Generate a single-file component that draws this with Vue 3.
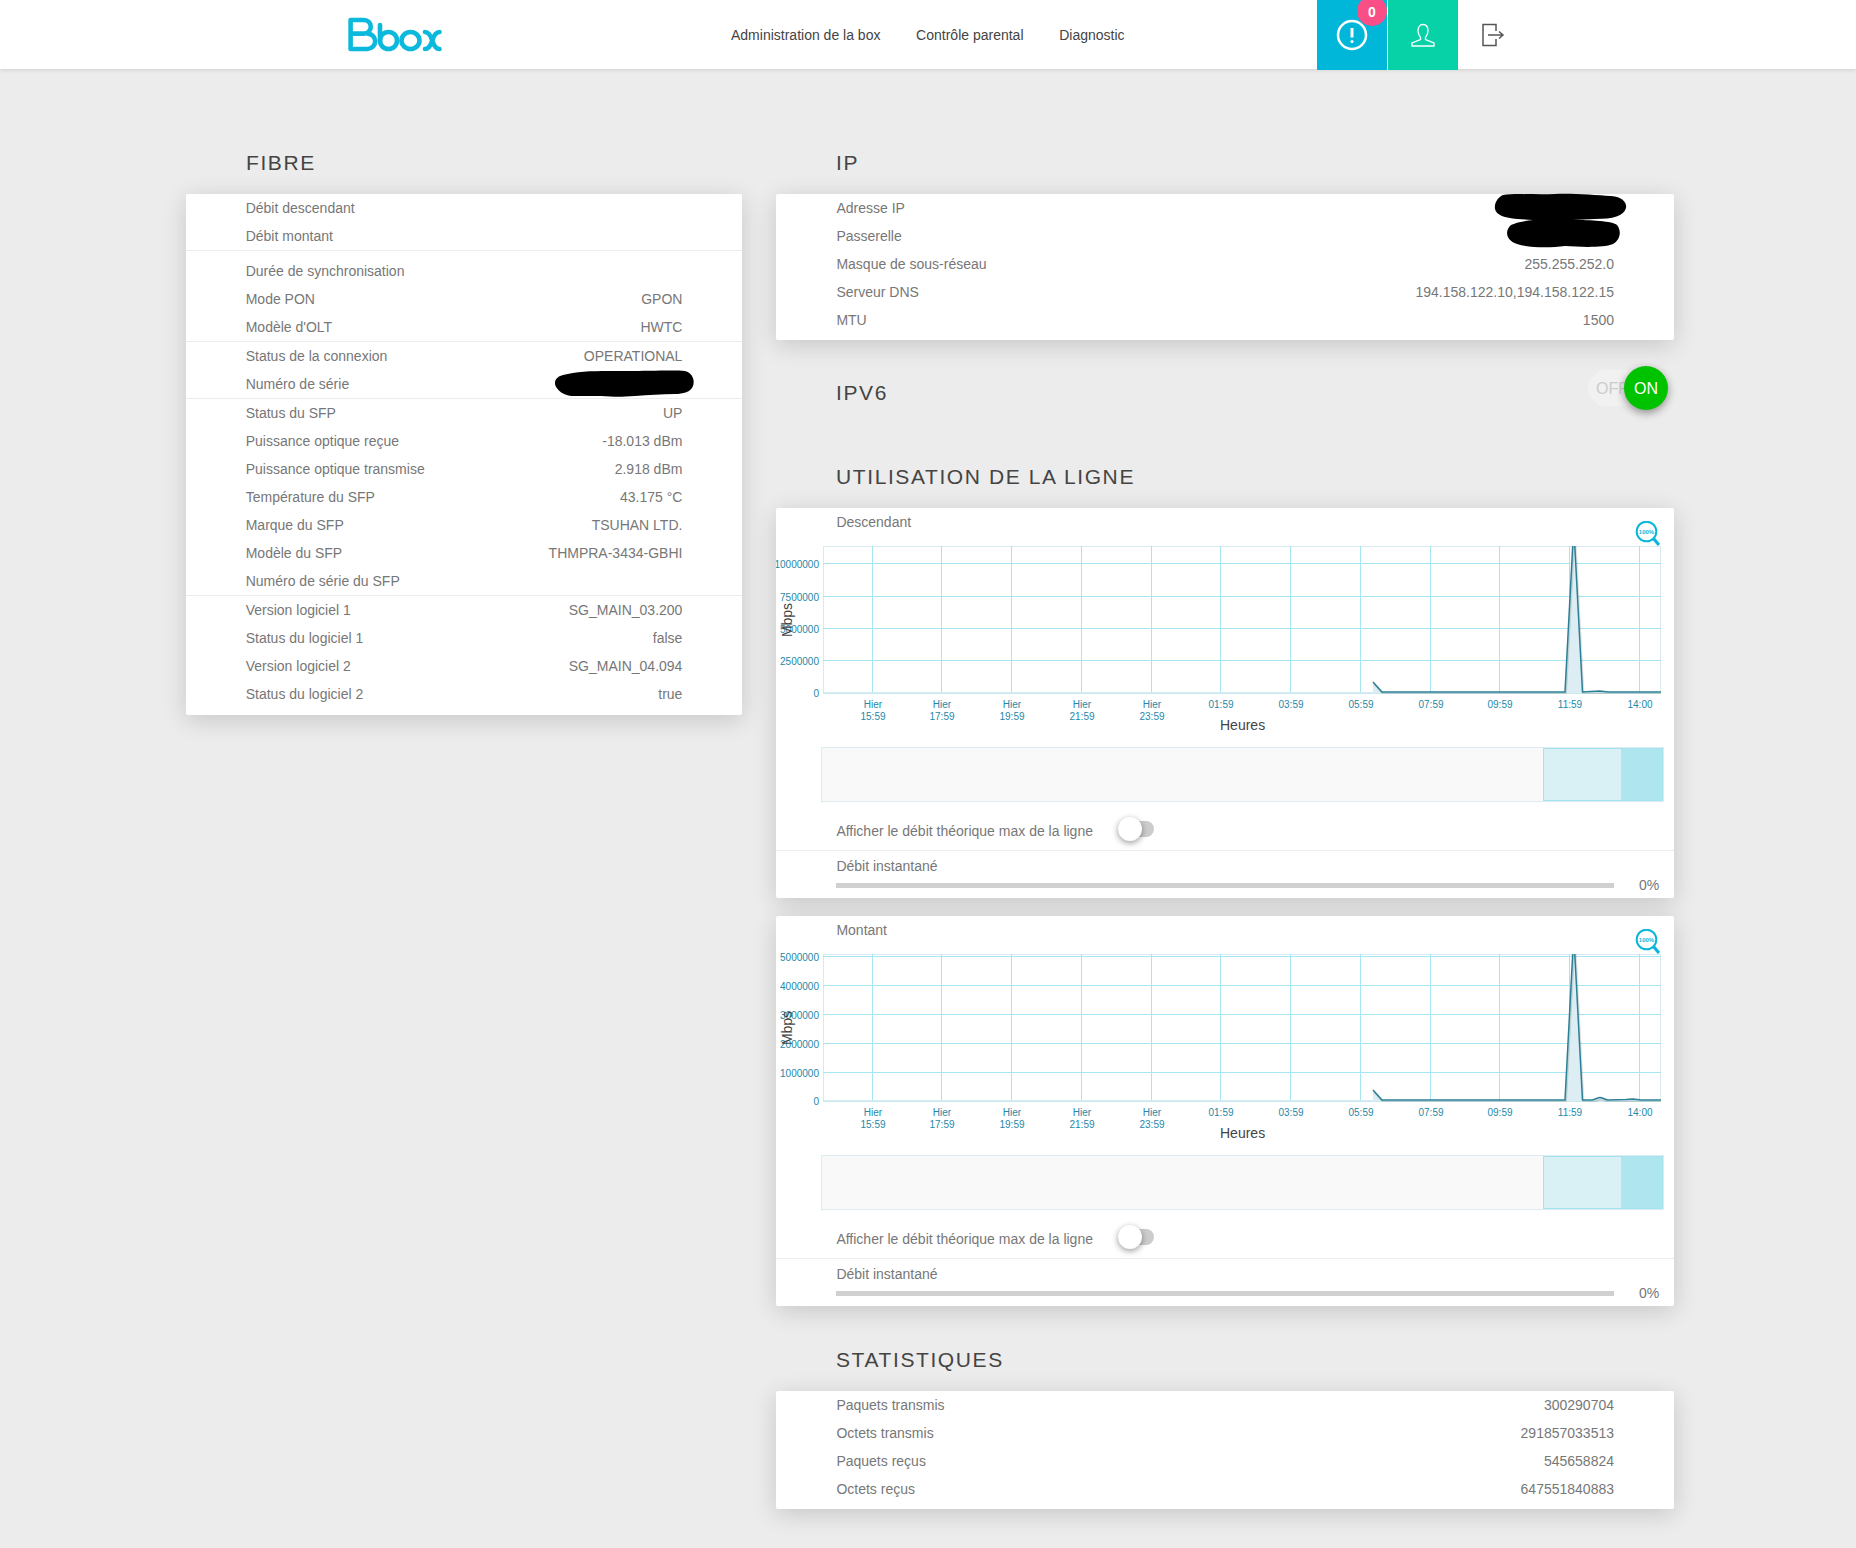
<template>
  <div class="page">
    <header class="topbar">
      <svg class="logo" width="97" height="37" viewBox="0 0 97 37" fill="none" stroke="#0cb9dc" stroke-width="4.600" stroke-linecap="round" stroke-linejoin="round">
        <path d="M3.600 4H17a6.800 6.800 0 0 1 0 13.600H3.600M3.600 4V33H20.500a7.700 7.700 0 0 0 0-15.400" />
        <path d="M33 9V25" />
        <circle cx="41.500" cy="24.500" r="8.500" />
        <ellipse cx="63.500" cy="24.500" rx="9" ry="8.500" />
        <path d="M78 16c3 0 5.500 3 7.250 8.500s4.250 8.500 7.250 8.500M92.500 16c-3 0-5.500 3-7.250 8.500s-4.250 8.500-7.250 8.500" />
      </svg>
      <nav class="menu">
        <span>Administration de la box</span>
        <span>Contrôle parental</span>
        <span>Diagnostic</span>
      </nav>
      <div class="tile tile-alert">
        <svg width="34" height="34" viewBox="0 0 34 34" fill="none" stroke="#fff">
          <circle cx="17" cy="17" r="14" stroke-width="2.500" />
          <path d="M17 10V19.500" stroke-width="3" />
          <circle cx="17" cy="23.500" r="1.500" fill="#fff" stroke="none" />
        </svg>
        <span class="badge">0</span>
      </div>
      <div class="tile tile-user">
        <svg width="26" height="26" viewBox="0 0 26 26" fill="none" stroke="#fff" stroke-width="1.300">
          <path d="M8 9c0-4 2-6.500 5-6.500s5 2.500 5 6.500c0 3-1.500 5-2.500 6.500v2l8.500 3.500v3H2v-3l8.500-3.500v-2C9.500 14 8 12 8 9z" />
        </svg>
      </div>
      <svg class="logout" width="24" height="24" viewBox="0 0 24 24" fill="none" stroke="#555" stroke-width="1.500">
        <path d="M15 8V1.500H2V22.500H15V16" />
        <path d="M7 12H22M18 8.500L22 12L18 15.500" />
      </svg>
    </header>

    <main class="content">
      <section class="col-left">
        <h2 class="title">FIBRE</h2>
        <div class="card">
          <div v-for="(group, g) in fibre" :key="g" class="group" :class="{ first: g === 0, spaced: g === 1 }">
            <div v-for="row in group" :key="row[0]" class="row">
              <span>{{ row[0] }}</span>
              <span>{{ row[1] }}</span>
            </div>
          </div>
          <svg class="scribble scribble-serial" width="140" height="28" viewBox="0 0 140 28">
            <path d="M8 5C25 0 50 1 72 1s48-1 58 0c8 2 10 10 8 15-2 6-10 8-18 8-14 0-26 1-40 2-14 1-20 1-34 0H16C6 25-1 17 0 12 1 8 4 6 8 5z" />
          </svg>
        </div>
      </section>

      <section class="col-right">
        <h2 class="title">IP</h2>
        <div class="card">
          <div v-for="row in ipRows" :key="row[0]" class="row">
            <span>{{ row[0] }}</span>
            <span>{{ row[1] }}</span>
          </div>
          <svg class="scribble scribble-ip" width="132" height="54" viewBox="0 0 132 54">
            <path d="M8 1C20-1 40 1 60 0 75-1 100 1 116 2 128 3 132 9 131 14 129 22 118 25 100 25L78 26C95 26 118 27 122 31 127 37 125 46 118 50 108 54 85 53 70 52 55 54 35 54 22 50 10 46 10 36 16 31 22 28 30 27 38 26L22 25C10 24 1 21 0 15-1 9 3 3 8 1z" />
          </svg>
        </div>

        <div class="ipv6-row">
          <h2 class="title">IPV6</h2>
          <div class="switch">
            <span class="switch-off">OFF</span>
            <span class="switch-on">ON</span>
          </div>
        </div>

        <h2 class="title usage-title">UTILISATION DE LA LIGNE</h2>
        <div v-for="chart in charts" :key="chart.name" class="card chart-card">
          <div class="row chart-name"><span>{{ chart.name }}</span></div>
          <svg class="chart" width="898" height="211" viewBox="0 0 898 211">
            <defs>
              <clipPath :id="'plot-' + chart.name">
                <rect x="47" y="10" width="838" height="148" />
              </clipPath>
            </defs>
            <rect x="47.500" y="10.500" width="837" height="147" fill="none" stroke="#d8eaef" />
            <line v-for="t in chart.ticks" :key="t.label" x1="47" x2="885" :y1="t.y" :y2="t.y" stroke="#a6e5f2" />
            <line v-for="h in hours" :key="h.x" :x1="h.x" :x2="h.x" y1="10" y2="157" stroke="#a6e5f2" />
            <rect x="47" y="156.500" width="838" height="1" fill="#d8eaef" />
            <g :clip-path="'url(#plot-' + chart.name + ')'">
              <path :d="chart.area" fill="#dceef4" />
              <path :d="chart.line" transform="translate(1 2)" fill="none" stroke="#000" stroke-opacity="0.12" stroke-width="2" />
              <path :d="chart.line" fill="none" stroke="#2b8096" stroke-width="1.500" />
            </g>

            <text v-for="t in chart.ticks" :key="t.label" x="43" :y="t.y + 4" text-anchor="end" class="axis">{{ t.label }}</text>
            <template v-for="h in hours" :key="h.x">
              <text v-if="h.day" :x="h.x + 0.500" y="172" text-anchor="middle" class="axis">Hier</text>
              <text :x="h.x + 0.500" :y="h.day ? 184 : 172" text-anchor="middle" class="axis">{{ h.time }}</text>
            </template>
            <text x="444" y="194" class="axis-name">Heures</text>
            <text class="axis-name" text-anchor="middle" transform="translate(16 84) rotate(-90)">Mbps</text>
          </svg>
          <svg class="zoom-icon" width="26" height="26" viewBox="0 0 26 26" fill="none" stroke="#0ab7da">
            <circle cx="11.500" cy="10.500" r="9.800" stroke-width="2" />
            <path d="M18.500 17.500L24 24" stroke-width="3.200" />
            <text x="11.500" y="12.500" text-anchor="middle" class="zoom-text">100%</text>
          </svg>

          <div class="brush">
            <div class="brush-range"><div class="brush-now"></div></div>
          </div>

          <div class="theory-row">
            <span>Afficher le débit théorique max de la ligne</span>
            <div class="mini-switch"><div class="mini-knob"></div></div>
          </div>
          <div class="row instant">
            <span>Débit instantané</span>
          </div>
          <div class="bar-row">
            <div class="bar"></div>
            <span class="pct">0%</span>
          </div>
        </div>

        <h2 class="title stats-title">STATISTIQUES</h2>
        <div class="card">
          <div v-for="row in stats" :key="row[0]" class="row">
            <span>{{ row[0] }}</span>
            <span>{{ row[1] }}</span>
          </div>
        </div>
      </section>
    </main>
  </div>
</template>

<script setup>
const fibre = [
  [
    ['Débit descendant', ''],
    ['Débit montant', '']
  ],
  [
    ['Durée de synchronisation', ''],
    ['Mode PON', 'GPON'],
    ["Modèle d'OLT", 'HWTC']
  ],
  [
    ['Status de la connexion', 'OPERATIONAL'],
    ['Numéro de série', '']
  ],
  [
    ['Status du SFP', 'UP'],
    ['Puissance optique reçue', '-18.013 dBm'],
    ['Puissance optique transmise', '2.918 dBm'],
    ['Température du SFP', '43.175 °C'],
    ['Marque du SFP', 'TSUHAN LTD.'],
    ['Modèle du SFP', 'THMPRA-3434-GBHI'],
    ['Numéro de série du SFP', '']
  ],
  [
    ['Version logiciel 1', 'SG_MAIN_03.200'],
    ['Status du logiciel 1', 'false'],
    ['Version logiciel 2', 'SG_MAIN_04.094'],
    ['Status du logiciel 2', 'true']
  ]
]

const ipRows = [
  ['Adresse IP', ''],
  ['Passerelle', ''],
  ['Masque de sous-réseau', '255.255.252.0'],
  ['Serveur DNS', '194.158.122.10,194.158.122.15'],
  ['MTU', '1500']
]

const stats = [
  ['Paquets transmis', '300290704'],
  ['Octets transmis', '291857033513'],
  ['Paquets reçus', '545658824'],
  ['Octets reçus', '647551840883']
]

const hours = [
  { x: 96.5, time: '15:59', day: true },
  { x: 165.5, time: '17:59', day: true },
  { x: 235.5, time: '19:59', day: true },
  { x: 305.5, time: '21:59', day: true },
  { x: 375.5, time: '23:59', day: true },
  { x: 444.5, time: '01:59' },
  { x: 514.5, time: '03:59' },
  { x: 584.5, time: '05:59' },
  { x: 654.5, time: '07:59' },
  { x: 723.5, time: '09:59' },
  { x: 793.5, time: '11:59' },
  { x: 863.5, time: '14:00' }
]

// the spike goes past the top of the plot, the clip cuts it
const spike = 'L789 156 L797.750 -10 L806.500 156'
const downLine = `M597 146 L606 156 ${spike} L815 155.500 L824 155 L832 156 L885 156`
const upLine = `M597 146 L606 156 ${spike} L816 156 C820 155 822 153.500 824 153.500 C826 153.500 828 155 832 156 L850 155.500 L857 155 L865 156 L885 156`

const charts = [
  {
    name: 'Descendant',
    line: downLine,
    area: downLine + ' L885 157 L597 157 Z',
    ticks: [
      { label: '10000000', y: 27.5 },
      { label: '7500000', y: 60.5 },
      { label: '5000000', y: 92.5 },
      { label: '2500000', y: 124.5 },
      { label: '0', y: 157 }
    ]
  },
  {
    name: 'Montant',
    line: upLine,
    area: upLine + ' L885 157 L597 157 Z',
    ticks: [
      { label: '5000000', y: 12.5 },
      { label: '4000000', y: 41.5 },
      { label: '3000000', y: 70.5 },
      { label: '2000000', y: 99.5 },
      { label: '1000000', y: 128.5 },
      { label: '0', y: 157 }
    ]
  }
]
</script>

<style>
html,
body {
  margin: 0;
  background: #ececec;
}
</style>

<style scoped>
.page {
  min-height: 1548px;
  background: #ececec;
  font-family: "Liberation Sans", Arial, sans-serif;
  font-size: 14px;
  color: #777;
}
.topbar {
  display: flex;
  align-items: center;
  height: 69px;
  background: #fff;
  box-shadow: 0 1px 4px rgba(0, 0, 0, 0.12);
  padding-left: 347px;
  position: relative;
}
.logo {
  flex: none;
}
.menu {
  display: flex;
  gap: 35.700px;
  margin-left: 287px;
  color: #444;
  width: 586px;
}
.tile {
  position: relative;
  width: 70px;
  height: 70px;
  display: flex;
  align-items: center;
  justify-content: center;
  margin-bottom: -1px;
}
.tile-alert {
  background: #00b6d9;
  margin-right: 1px;
}
.tile-user {
  background: #07d2a7;
}
.badge {
  position: absolute;
  top: -4px;
  right: 0;
  width: 30px;
  height: 30px;
  border-radius: 50%;
  background: #f94f86;
  color: #fff;
  font-weight: bold;
  text-align: center;
  line-height: 33px;
}
.logout {
  margin-left: 23px;
  margin-bottom: -1px;
}
.content {
  display: flex;
  gap: 34px;
  padding: 79px 0 39px 186px;
}
.col-left {
  width: 556px;
}
.col-right {
  width: 898px;
}
.title {
  margin: 0 0 18px 60px;
  font-size: 21px;
  font-weight: normal;
  line-height: 29px;
  height: 28px;
  letter-spacing: 1.600px;
  color: #444;
}
.card {
  position: relative;
  background: #fff;
  border-radius: 2px;
  box-shadow: 0 5px 25px rgba(0, 0, 0, 0.16);
  padding-bottom: 6px;
}
.col-left .card {
  padding-bottom: 7px;
}
.row {
  display: flex;
  justify-content: space-between;
  height: 28px;
  line-height: 29px;
  padding: 0 60px 0 60.400px;
}
.col-left .row {
  padding: 0 59.600px 0 59.700px;
}
.group {
  border-top: 1px solid #ececec;
}
.group.first {
  border-top: 0;
}
.group.spaced {
  padding-top: 6px;
}
.scribble {
  position: absolute;
  fill: #000;
  overflow: visible;
}
.scribble-serial {
  left: 369px;
  top: 176px;
}
.scribble-ip {
  left: 719px;
  top: 0;
}
.ipv6-row {
  display: flex;
  justify-content: space-between;
  margin-top: 38px;
  padding-right: 6px;
  height: 28px;
}
.ipv6-row .title {
  margin-bottom: 0;
}
.switch {
  position: relative;
  width: 80px;
  height: 36px;
  margin-top: -8px;
  background: #f1f1f1;
  border-radius: 18px;
  color: #ccc;
  font-size: 16px;
  line-height: 37px;
}
.switch-off {
  padding-left: 8px;
}
.switch-on {
  position: absolute;
  right: 0;
  top: -4px;
  width: 44px;
  height: 44px;
  border-radius: 50%;
  background: #00c300;
  color: #fff;
  text-align: center;
  line-height: 45px;
  box-shadow: 0 3px 8px rgba(0, 0, 0, 0.4);
}
.usage-title {
  margin-top: 56px;
}
.chart-card {
  margin-bottom: 18px;
  padding-bottom: 0;
  height: 390px;
}
.chart {
  display: block;
}
.axis {
  font-size: 10px;
  fill: #2588a8;
}
.axis-name {
  font-size: 14px;
  fill: #444;
}
.zoom-icon {
  position: absolute;
  left: 859px;
  top: 12.500px;
}
.zoom-text {
  font-size: 6px;
  font-weight: bold;
  fill: #0ab7da;
  stroke: none;
}
.brush {
  box-sizing: border-box;
  margin-left: 45px;
  width: 843px;
  height: 55px;
  background: #f9f9f9;
  border: 1px solid #dcedf2;
  display: flex;
  justify-content: flex-end;
}
.brush-range {
  box-sizing: border-box;
  width: 120px;
  height: 53px;
  background: #d9f0f5;
  border: 1px solid #a5e3ee;
  display: flex;
  justify-content: flex-end;
}
.brush-now {
  width: 41px;
  background: #aee5ef;
}
.theory-row {
  display: flex;
  align-items: center;
  box-sizing: border-box;
  height: 49px;
  padding: 10px 0 0 60.400px;
  border-bottom: 1px solid #ececec;
}
.mini-switch {
  position: relative;
  width: 36px;
  height: 16px;
  margin: -4px 0 0 25px;
  background: #ccc;
  border-radius: 8px;
}
.mini-knob {
  position: absolute;
  left: 0;
  top: -4px;
  width: 24px;
  height: 24px;
  border-radius: 50%;
  background: #fff;
  box-shadow: 0 2px 6px rgba(0, 0, 0, 0.4);
}
.instant {
  line-height: 30px;
}
.bar-row {
  display: flex;
  align-items: center;
  height: 12px;
  padding: 0 15px 0 60px;
}
.bar {
  flex: 1;
  height: 5px;
  margin: 1px 25px 0 0;
  background: #d0d0d0;
}
.pct {
  width: 20px;
  text-align: right;
}
.stats-title {
  margin-top: 39px;
  margin-bottom: 18px;
}
</style>
